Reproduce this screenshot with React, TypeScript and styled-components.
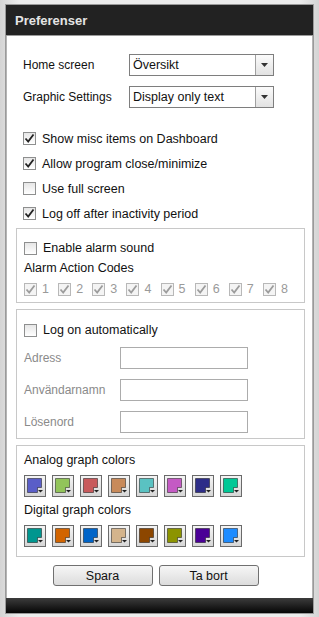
import styled, { createGlobalStyle } from 'styled-components'

const GlobalStyle = createGlobalStyle`
  html, body {
    margin: 0;
    padding: 0;
    background: #e6e6e6;
  }
  body {
    font-family: "Liberation Sans", Arial, sans-serif;
    font-size: 12px;
    color: #111;
  }
`

const Page = styled.div`
  width: 319px;
  height: 617px;
  padding: 4px 5px 0 5px;
  box-sizing: border-box;
  background: linear-gradient(90deg, #d4d4d4 0%, #ececec 6%, #ececec 94%, #d4d4d4 100%);
`

const Dialog = styled.div`
  width: 309px;
  background: #fff;
  border: 1px solid #9a9a9a;
  box-sizing: border-box;
`

const TitleBar = styled.div`
  height: 30px;
  background: #222;
  color: #e4e4e4;
  font-weight: 700;
  font-size: 13px;
  display: flex;
  align-items: center;
  padding-left: 9px;
  border-bottom: 1px solid #9a9a9a;
`

const Body = styled.div`
  border-left: 1px solid #b4b4b4;
  border-right: 1px solid #b4b4b4;
  padding: 18px 7px 12px 9px;
  display: flex;
  flex-direction: column;
`

const FormRow = styled.div`
  display: flex;
  align-items: center;
  height: 22px;
  padding-left: 7px;
  margin-bottom: 10px;
`

const RowLabel = styled.span<{ $muted?: boolean }>`
  width: 106px;
  color: ${p => (p.$muted ? '#8a8a8a' : '#111')};
`

const Select = styled.div`
  width: 145px;
  height: 22px;
  box-sizing: border-box;
  border: 1px solid #7e7e7e;
  display: flex;
  align-items: center;
  background: #fff;
`

const SelectText = styled.span`
  flex: 1;
  padding-left: 3px;
  font-size: 12.5px;
`

const SelectButton = styled.span`
  width: 17px;
  height: 100%;
  border-left: 1px solid #a0a0a0;
  background: linear-gradient(#fbfbfb, #e2e2e2);
  display: flex;
  align-items: center;
  justify-content: center;
`

const CheckList = styled.div`
  display: flex;
  flex-direction: column;
  margin-top: 8px;
  padding-left: 7px;
`

const CheckRow = styled.label<{ $compact?: boolean }>`
  display: flex;
  align-items: center;
  height: ${p => (p.$compact ? 20 : 25)}px;
  gap: 6px;
  font-size: 12.5px;
`

const Box = styled.span<{ $disabled?: boolean }>`
  width: 13px;
  height: 13px;
  box-sizing: border-box;
  border: 1px solid ${p => (p.$disabled ? '#b8b8b8' : '#8e8f8f')};
  background: ${p => (p.$disabled ? '#f4f4f4' : 'linear-gradient(#e6e6e6, #ffffff)')};
  display: flex;
  align-items: center;
  justify-content: center;
  flex-shrink: 0;
`

const Fieldset = styled.div<{ $top?: number; $padTop?: number }>`
  border: 1px solid #c8c8c8;
  margin-top: ${p => p.$top ?? 6}px;
  padding: ${p => p.$padTop ?? 10}px 7px 0 7px;
  display: flex;
  flex-direction: column;
`

const Caption = styled.div`
  height: 20px;
  display: flex;
  align-items: center;
  font-size: 12.5px;
`

const CodeRow = styled.div`
  display: flex;
  height: 22px;
  align-items: center;
  margin-bottom: 2px;
`

const Code = styled.span`
  width: 35px;
  display: flex;
  align-items: center;
  gap: 5px;
  color: #9a9a9a;
  font-size: 12.5px;
`

const InputRow = styled.div`
  display: flex;
  align-items: center;
  height: 22px;
  margin-top: 10px;
  &:nth-child(2) {
    margin-top: 7px;
  }
  &:last-child {
    margin-bottom: 5px;
  }
`

const TextInput = styled.div`
  width: 128px;
  height: 22px;
  box-sizing: border-box;
  border: 1px solid #acacac;
  margin-left: -10px;
`

const SwatchRow = styled.div`
  display: flex;
  gap: 6px;
  height: 22px;
  margin: 5px 0 3px 0;
  &:last-child {
    margin-bottom: 9px;
  }
`

const Swatch = styled.span`
  width: 22px;
  height: 22px;
  box-sizing: border-box;
  border: 1px solid #6a6a6a;
  background: linear-gradient(#f4f4f4, #d6d6d6);
  display: block;
`

const ButtonBar = styled.div`
  display: flex;
  justify-content: center;
  gap: 6px;
  margin-top: 8px;
  padding-right: 10px;
`

const Button = styled.button`
  width: 100px;
  height: 21px;
  border: 1px solid #707070;
  border-radius: 3px;
  background: linear-gradient(#f6f6f6, #dcdcdc);
  font-family: "Liberation Sans", Arial, sans-serif;
  font-size: 12.5px;
  color: #111;
  padding: 0;
`

const FooterBar = styled.div`
  height: 15px;
  background: linear-gradient(#3c3c3c, #050505);
`

const Arrow = () => (
  <svg width="7" height="4" viewBox="0 0 7 4">
    <polygon points="0,0 7,0 3.5,4" fill="#333" />
  </svg>
)

const Check = ({ checked, disabled }: { checked?: boolean; disabled?: boolean }) => (
  <Box $disabled={disabled}>
    {checked && (
      <svg width="11" height="11" viewBox="0 0 11 11">
        <path
          d="M1.5 5.5 L4.2 8.5 L9.5 1.5"
          fill="none"
          stroke={disabled ? '#9c9c9c' : '#222'}
          strokeWidth="1.8"
        />
      </svg>
    )}
  </Box>
)

const ColorSwatch = ({ color }: { color: string }) => (
  <Swatch>
    <svg width="20" height="20" viewBox="0 0 20 20">
      <polygon
        points="2.5,2.5 16.5,2.5 16.5,11.5 12.5,11.5 12.5,16.5 2.5,16.5"
        fill={color}
        stroke="rgba(0,0,0,0.45)"
        strokeWidth="1"
      />
      <polygon points="13,14 18,14 15.5,16.5" fill="#222" />
    </svg>
  </Swatch>
)

const analog = ['#5a5ec8', '#92c45a', '#c85a5c', '#c88a5a', '#5ac2c2', '#c45ac4', '#2d2d88', '#00c896']
const digital = ['#00968f', '#d26400', '#0064c8', '#d4b48c', '#8c4600', '#8c9400', '#4a0096', '#1e8cff']

export default function App() {
  return (
    <>
      <GlobalStyle />
      <Page>
        <Dialog>
          <TitleBar>Preferenser</TitleBar>
          <Body>
            <FormRow>
              <RowLabel>Home screen</RowLabel>
              <Select>
                <SelectText>Översikt</SelectText>
                <SelectButton>
                  <Arrow />
                </SelectButton>
              </Select>
            </FormRow>
            <FormRow>
              <RowLabel>Graphic Settings</RowLabel>
              <Select>
                <SelectText>Display only text</SelectText>
                <SelectButton>
                  <Arrow />
                </SelectButton>
              </Select>
            </FormRow>

            <CheckList>
              <CheckRow>
                <Check checked />
                Show misc items on Dashboard
              </CheckRow>
              <CheckRow>
                <Check checked />
                Allow program close/minimize
              </CheckRow>
              <CheckRow>
                <Check />
                Use full screen
              </CheckRow>
              <CheckRow>
                <Check checked />
                Log off after inactivity period
              </CheckRow>
            </CheckList>

            <Fieldset $top={2} $padTop={9}>
              <CheckRow $compact>
                <Check />
                Enable alarm sound
              </CheckRow>
              <Caption>Alarm Action Codes</Caption>
              <CodeRow>
                {[1, 2, 3, 4, 5, 6, 7, 8].map(n => (
                  <Code key={n}>
                    <Check checked disabled />
                    {n}
                  </Code>
                ))}
              </CodeRow>
            </Fieldset>

            <Fieldset>
              <CheckRow $compact>
                <Check />
                Log on automatically
              </CheckRow>
              <InputRow>
                <RowLabel $muted>Adress</RowLabel>
                <TextInput />
              </InputRow>
              <InputRow>
                <RowLabel $muted>Användarnamn</RowLabel>
                <TextInput />
              </InputRow>
              <InputRow>
                <RowLabel $muted>Lösenord</RowLabel>
                <TextInput />
              </InputRow>
            </Fieldset>

            <Fieldset $padTop={4}>
              <Caption>Analog graph colors</Caption>
              <SwatchRow>
                {analog.map(c => (
                  <ColorSwatch key={c} color={c} />
                ))}
              </SwatchRow>
              <Caption>Digital graph colors</Caption>
              <SwatchRow>
                {digital.map(c => (
                  <ColorSwatch key={c} color={c} />
                ))}
              </SwatchRow>
            </Fieldset>

            <ButtonBar>
              <Button>Spara</Button>
              <Button>Ta bort</Button>
            </ButtonBar>
          </Body>
          <FooterBar />
        </Dialog>
      </Page>
    </>
  )
}
